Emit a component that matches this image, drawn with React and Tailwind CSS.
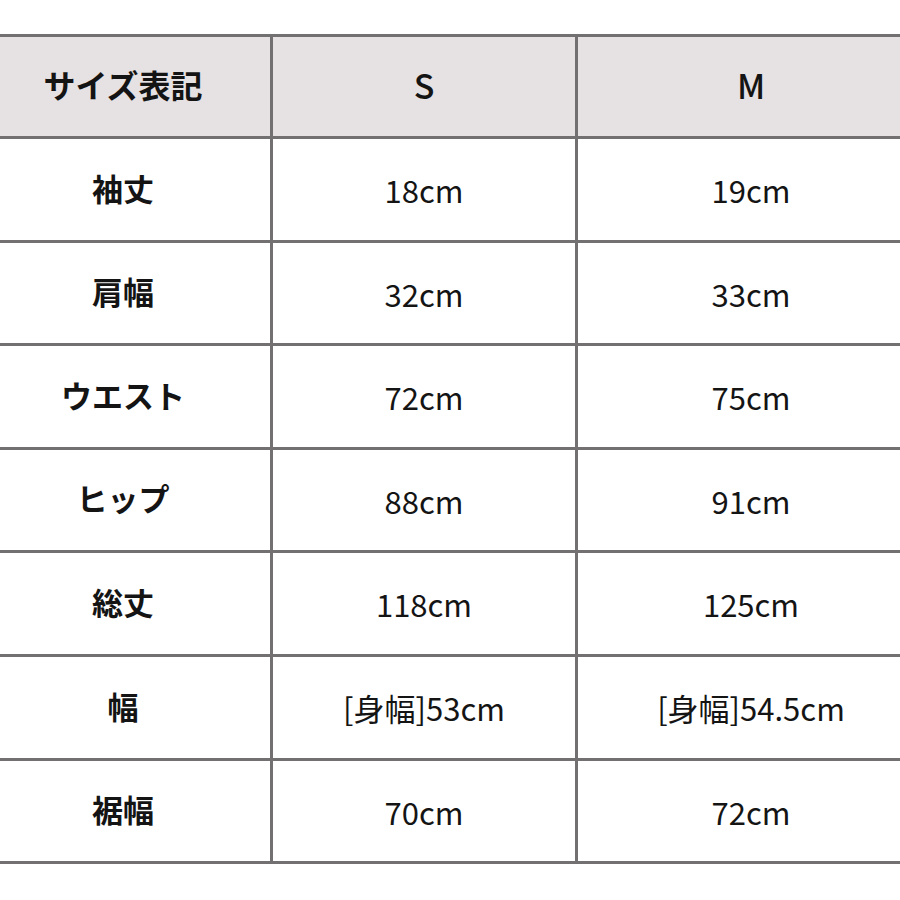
import React from 'react';

const rows = [
  ['袖丈', '18cm', '19cm'],
  ['肩幅', '32cm', '33cm'],
  ['ウエスト', '72cm', '75cm'],
  ['ヒップ', '88cm', '91cm'],
  ['総丈', '118cm', '125cm'],
  ['幅', '[身幅]53cm', '[身幅]54.5cm'],
  ['裾幅', '70cm', '72cm'],
];

const font = { fontFamily: '"Noto Sans CJK JP", "Noto Sans", sans-serif' };

export default function App() {
  return (
    <div className="w-[900px] h-[900px] bg-white pt-[34px] text-[#141414]" style={font}>
      <div className="border-t-[3px] border-[#727070]">
        <div className="grid grid-cols-[273px_305px_1fr] h-[102px] bg-[#e6e1e3] border-b-[3px] border-[#727070]">
          <div className="flex items-center justify-center pr-[24px] pb-[5px] border-r-[3px] border-[#727070] text-[32px] font-bold">
            サイズ表記
          </div>
          <div className="flex items-center justify-center pb-[5px] border-r-[3px] border-[#727070] text-[34px] font-medium">
            S
          </div>
          <div className="flex items-center justify-center pl-[24px] pb-[5px] text-[34px] font-medium">M</div>
        </div>
        {rows.map(([label, s, m]) => (
          <div
            key={label}
            className="grid grid-cols-[273px_305px_1fr] h-[103.6px] border-b-[3px] border-[#727070]"
          >
            <div className="flex items-center justify-center pr-[24px] pb-[3px] border-r-[3px] border-[#727070] text-[31px] font-bold">
              {label}
            </div>
            <div className="flex items-center justify-center border-r-[3px] border-[#727070] text-[31px] pt-[2px]">
              {s}
            </div>
            <div className="flex items-center justify-center pl-[24px] text-[31px] pt-[2px]">{m}</div>
          </div>
        ))}
      </div>
    </div>
  );
}
